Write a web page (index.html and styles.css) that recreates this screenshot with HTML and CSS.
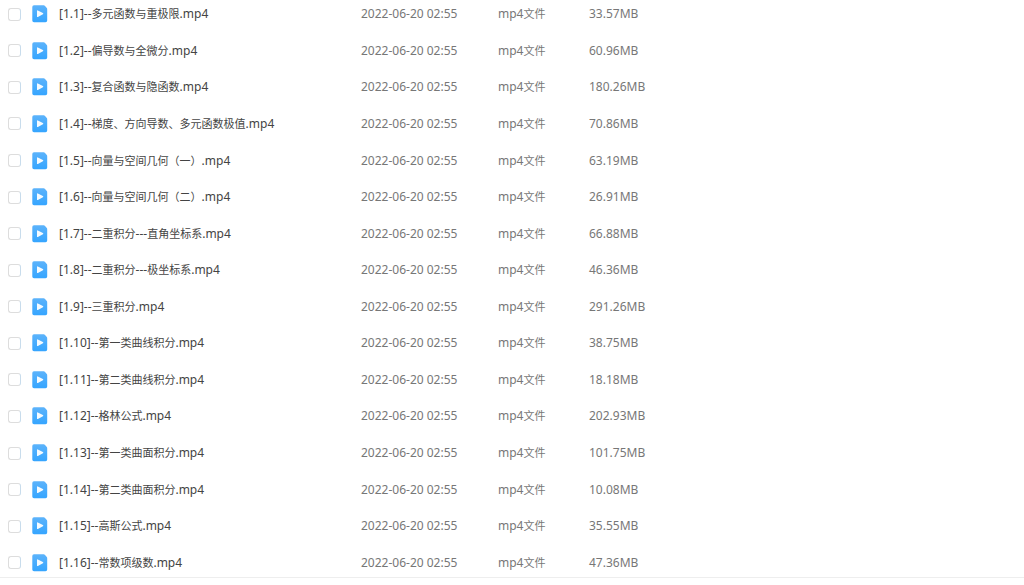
FILE: index.html
```
<!DOCTYPE html>
<html lang="zh-CN">
<head>
    <meta charset="UTF-8">
    <meta name="viewport" content="width=device-width, initial-scale=1.0">
    <title>文件列表</title>
    <link rel="stylesheet" href="styles.css">
</head>
<body>
    <!-- shared video file icon -->
    <svg class="sprite" aria-hidden="true">
        <defs>
            <linearGradient id="videoFill" x1="0" y1="0" x2="0" y2="1">
                <stop offset="0" stop-color="#5cb3fb"/>
                <stop offset="1" stop-color="#35a5ff"/>
            </linearGradient>
        </defs>
        <symbol id="video" viewBox="0 0 16 18">
            <path d="M2 0.2h9.6a1.6 1.6 0 0 1 1.2 0.5l2 2.4a1.6 1.6 0 0 1 0.4 1.1V15.6a1.7 1.7 0 0 1-1.7 1.7H2A1.7 1.7 0 0 1 0.3 15.6V1.9A1.7 1.7 0 0 1 2 0.2z" fill="url(#videoFill)"/>
            <path d="M5 5.9v5.5a0.6 0.6 0 0 0 0.9 0.5l5-2.7a0.6 0.6 0 0 0 0-1.1l-5-2.7a0.6 0.6 0 0 0-0.9 0.5z" fill="#fff" fill-opacity="0.95"/>
        </symbol>
    </svg>

    <main class="file-panel">
        <table class="file-table" id="fileTable" aria-label="文件列表">
            <colgroup>
                <col class="col-check">
                <col class="col-icon">
                <col class="col-name">
                <col class="col-date">
                <col class="col-type">
                <col class="col-size">
            </colgroup>
            <tbody id="fileRows"></tbody>
        </table>
    </main>
    <footer class="panel-footer"></footer>

    <script src="files.js"></script>
</body>
</html>
```
FILE: styles.css
```
* {
    margin: 0;
    padding: 0;
    box-sizing: border-box;
}

body {
    font-family: "Noto Sans", "Noto Sans CJK SC", sans-serif;
    font-size: 12px;
    line-height: 16px;
    color: #777;
    background: #fff;
    height: 100vh;
    overflow: hidden;
}

.sprite {
    position: absolute;
    width: 0;
    height: 0;
}

.file-panel {
    margin-top: -4px;
}

.file-table {
    width: 100%;
    height: 100vh;
    table-layout: fixed;
    border-collapse: collapse;
}

.file-table td {
    vertical-align: middle;
    white-space: nowrap;
}

.col-check {
    width: 32px;
}

.col-icon {
    width: 27px;
}

.col-name {
    width: 302px;
}

.col-date {
    width: 137px;
}

.col-type {
    width: 91px;
}

.file-name {
    color: #444;
}

/* Chinese runs are set a little smaller than the digits */
.zh {
    font-size: 11px;
}

.file-check {
    appearance: none;
    display: block;
    width: 13px;
    height: 13px;
    margin-left: 8px;
    border: 1px solid #ddd;
    border-right-color: #c8dcec;
    border-radius: 3px;
    background: #fff;
}

.file-check:checked {
    background: #35a5ff;
}

.file-icon {
    display: block;
    width: 16px;
    height: 18px;
}

.panel-footer {
    position: fixed;
    left: 0;
    right: 0;
    bottom: 0;
    height: 8px;
    background: #fff;
    border-top: 1px solid #eee;
}
```
FILE: files.js
```
const files = [
    ['[1.1]--多元函数与重极限.mp4', '33.57MB'],
    ['[1.2]--偏导数与全微分.mp4', '60.96MB'],
    ['[1.3]--复合函数与隐函数.mp4', '180.26MB'],
    ['[1.4]--梯度、方向导数、多元函数极值.mp4', '70.86MB'],
    ['[1.5]--向量与空间几何（一）.mp4', '63.19MB'],
    ['[1.6]--向量与空间几何（二）.mp4', '26.91MB'],
    ['[1.7]--二重积分---直角坐标系.mp4', '66.88MB'],
    ['[1.8]--二重积分---极坐标系.mp4', '46.36MB'],
    ['[1.9]--三重积分.mp4', '291.26MB'],
    ['[1.10]--第一类曲线积分.mp4', '38.75MB'],
    ['[1.11]--第二类曲线积分.mp4', '18.18MB'],
    ['[1.12]--格林公式.mp4', '202.93MB'],
    ['[1.13]--第一类曲面积分.mp4', '101.75MB'],
    ['[1.14]--第二类曲面积分.mp4', '10.08MB'],
    ['[1.15]--高斯公式.mp4', '35.55MB'],
    ['[1.16]--常数项级数.mp4', '47.36MB']
];

function markChinese(text) {
    return text.replace(/[^\x00-\x7f]+/g, '<span class="zh">$&</span>');
}

document.getElementById('fileRows').innerHTML = files.map(([name, size], i) => `
    <tr>
        <td><input type="checkbox" class="file-check" id="file${i}" aria-labelledby="name${i}"></td>
        <td><svg class="file-icon" aria-hidden="true"><use href="#video"/></svg></td>
        <td class="file-name"><label for="file${i}" id="name${i}">${markChinese(name)}</label></td>
        <td>2022-06-20 02:55</td>
        <td>${markChinese('mp4文件')}</td>
        <td>${size}</td>
    </tr>`).join('');
```
